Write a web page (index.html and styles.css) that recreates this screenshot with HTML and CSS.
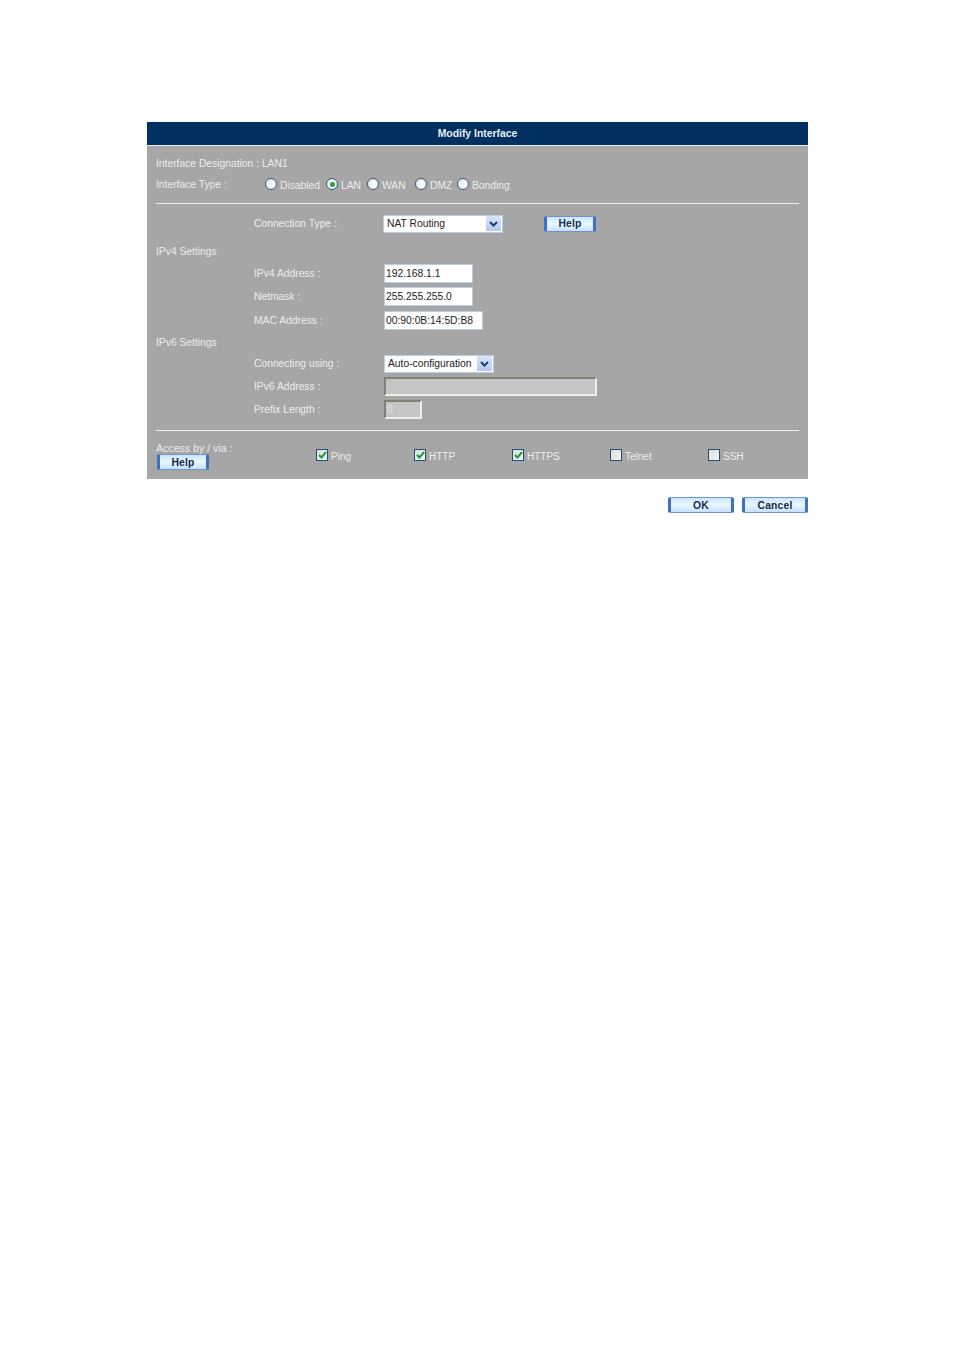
FILE: index.html
```html
<!DOCTYPE html>
<html lang="en">
<head>
    <meta charset="UTF-8">
    <title>Modify Interface</title>
    <link rel="stylesheet" href="styles.css">
</head>
<body>
    <div class="page">
        <div class="panel-title">Modify Interface</div>
        <div class="panel">
            <div class="line designation">Interface Designation : LAN1</div>
            <div class="type-row">
                <span class="type-label">Interface Type :</span>
                <span class="radios">
                    <span class="opt r1"><span class="radio"></span><span class="opt-text">Disabled</span></span>
                    <span class="opt r2"><span class="radio on"></span><span class="opt-text">LAN</span></span>
                    <span class="opt r3"><span class="radio"></span><span class="opt-text">WAN</span></span>
                    <span class="opt r4"><span class="radio"></span><span class="opt-text">DMZ</span></span>
                    <span class="opt r5"><span class="radio"></span><span class="opt-text">Bonding</span></span>
                </span>
            </div>
            <div class="rule rule-top"></div>

            <div class="row conn-row">
                <span class="label">Connection Type :</span>
                <span class="select w-nat">
                    <span class="select-text">NAT Routing</span>
                    <span class="arrow"><svg width="9" height="6" viewBox="0 0 9 6"><path d="M1 1l3.5 3.5L8 1" fill="none" stroke="#1c3f7a" stroke-width="2"/></svg></span>
                </span>
                <span class="btn btn-conn">Help</span>
            </div>

            <div class="section v4">IPv4 Settings</div>
            <div class="row ip-row">
                <span class="label">IPv4 Address :</span>
                <span class="input w-ip">192.168.1.1</span>
            </div>
            <div class="row ip-row">
                <span class="label">Netmask :</span>
                <span class="input w-ip">255.255.255.0</span>
            </div>
            <div class="row ip-row">
                <span class="label">MAC Address :</span>
                <span class="input w-mac">00:90:0B:14:5D:B8</span>
            </div>

            <div class="section v6">IPv6 Settings</div>
            <div class="row using-row">
                <span class="label">Connecting using :</span>
                <span class="select w-auto">
                    <span class="select-text">Auto-configuration</span>
                    <span class="arrow"><svg width="9" height="6" viewBox="0 0 9 6"><path d="M1 1l3.5 3.5L8 1" fill="none" stroke="#1c3f7a" stroke-width="2"/></svg></span>
                </span>
            </div>
            <div class="row ip-row">
                <span class="label">IPv6 Address :</span>
                <span class="input disabled w-v6"></span>
            </div>
            <div class="row ip-row">
                <span class="label">Prefix Length :</span>
                <span class="input disabled w-prefix">0</span>
            </div>
            <div class="rule rule-bottom"></div>

            <div class="access">
                <div class="access-left">
                    <div class="access-label">Access by / via :</div>
                    <span class="btn btn-access">Help</span>
                </div>
                <div class="checks">
                    <span class="check-item"><span class="check on"><svg width="9" height="8" viewBox="0 0 9 8"><path d="M1 4l2.5 2.5L8 1.2" fill="none" stroke="#14a02a" stroke-width="2"/></svg></span><span class="opt-text">Ping</span></span>
                    <span class="check-item"><span class="check on"><svg width="9" height="8" viewBox="0 0 9 8"><path d="M1 4l2.5 2.5L8 1.2" fill="none" stroke="#14a02a" stroke-width="2"/></svg></span><span class="opt-text">HTTP</span></span>
                    <span class="check-item"><span class="check on"><svg width="9" height="8" viewBox="0 0 9 8"><path d="M1 4l2.5 2.5L8 1.2" fill="none" stroke="#14a02a" stroke-width="2"/></svg></span><span class="opt-text">HTTPS</span></span>
                    <span class="check-item"><span class="check"></span><span class="opt-text">Telnet</span></span>
                    <span class="check-item last"><span class="check"></span><span class="opt-text">SSH</span></span>
                </div>
            </div>
        </div>
        <div class="actions">
            <span class="btn btn-ok">OK</span>
            <span class="btn btn-cancel">Cancel</span>
        </div>
    </div>
</body>
</html>
```
FILE: styles.css
```css
* {
    margin: 0;
    padding: 0;
    box-sizing: border-box;
}
body {
    background: white;
    font-family: "Liberation Sans", Arial, sans-serif;
    font-size: 10.3px;
    height: 1350px;
    overflow: hidden;
}
.page {
    width: 661px;
    margin-left: 147px;
    padding-top: 122px;
}
.panel-title {
    height: 23px;
    background: #00305f;
    color: #e8edf3;
    font-size: 10.4px;
    font-weight: bold;
    display: flex;
    align-items: center;
    justify-content: center;
}
.panel {
    height: 334px;
    background: #a6a6a6;
    border-top: 1px solid #f0f0f0;
    padding: 0 9px;
    color: #ececec;
}
.line {
    line-height: 13px;
}
.designation {
    padding-top: 11px;
    height: 24px;
}
.type-row {
    display: flex;
    height: 33px;
    padding-top: 8px;
}
.type-label {
    width: 109px;
    line-height: 13px;
}
.radios {
    display: flex;
    align-items: flex-start;
}
.opt {
    display: flex;
}
.opt .opt-text {
    padding-top: 1.5px;
    margin-left: 3px;
}
.r1 { width: 61px; }
.r2 { width: 41px; }
.r3 { width: 48px; }
.r4 { width: 42px; }
.radio {
    width: 12px;
    height: 12px;
    border-radius: 50%;
    background: radial-gradient(circle at 60% 60%, #ffffff, #dfe4ec);
    border: 1px solid #33597f;
    display: flex;
    align-items: center;
    justify-content: center;
}
.radio.on::after {
    content: "";
    width: 5px;
    height: 5px;
    border-radius: 50%;
    background: #1ea332;
}
.rule {
    height: 1px;
    background: #ededed;
}
.row {
    display: flex;
    align-items: center;
    padding-left: 98px;
}
.label {
    width: 130px;
}
.conn-row {
    height: 19px;
    margin-top: 10px;
}
.section {
    line-height: 13px;
}
.v4 {
    margin-top: 12px;
    height: 18.5px;
}
.ip-row {
    height: 19px;
    margin-bottom: 4.5px;
}
.v6 {
    margin-top: 6px;
    height: 19px;
}
.using-row {
    height: 18px;
    margin-bottom: 4px;
}
.select {
    height: 18px;
    background: white;
    color: #222;
    display: flex;
    align-items: center;
    justify-content: space-between;
    padding: 0 1px 0 3px;
    border: 1px solid #b9cde4;
}
.select-text {
    white-space: nowrap;
}
.w-nat { width: 120px; margin-left: -1px; }
.w-auto { width: 110px; }
.arrow {
    width: 15px;
    height: 15px;
    background: linear-gradient(#dbe6f8, #b4c9ee);
    border-radius: 1px;
    display: flex;
    align-items: center;
    justify-content: center;
}
.input {
    height: 19px;
    background: white;
    color: #222;
    border: 1px solid #b9cde4;
    padding-left: 1px;
    display: flex;
    align-items: center;
}
.w-ip { width: 89px; }
.w-mac { width: 99px; }
.w-v6 { width: 213px; }
.w-prefix { width: 38px; }
.input.disabled {
    background: #c6c6c6;
    color: #e2e2e2;
    border: 2px solid;
    border-color: #827f74 #f0efea #f0efea #827f74;
}
.rule-bottom {
    margin-top: 11px;
}
.access {
    display: flex;
    padding-top: 11px;
}
.access-left {
    width: 160px;
    flex: none;
}
.access-label {
    line-height: 13px;
    font-size: 10.6px;
}
.btn {
    display: flex;
    align-items: center;
    justify-content: center;
    height: 16px;
    color: #14284a;
    font-weight: bold;
    letter-spacing: 0.2px;
    background: linear-gradient(#c8e6fd, #eaf7ff 50%, #c4e0fb);
    border: 1px solid #6d93d8;
    border-left: 3px solid #3f6fc4;
    border-right: 3px solid #3f6fc4;
    border-radius: 2px;
}
.btn-conn {
    width: 52px;
    margin-left: 41px;
}
.btn-access {
    width: 52px;
    margin: -1px 0 0 1px;
}
.checks {
    display: flex;
    padding-top: 7px;
}
.check-item {
    width: 98px;
    display: flex;
}
.check-item.last {
    width: 60px;
}
.check-item .opt-text {
    padding-top: 1.5px;
    margin-left: 3px;
    font-size: 10px;
}
.check {
    width: 12px;
    height: 12px;
    background: linear-gradient(135deg, #d9dcdd, #f6f6f6);
    border: 1px solid #1f4e79;
    display: flex;
    align-items: center;
    justify-content: center;
}
.actions {
    display: flex;
    justify-content: flex-end;
    gap: 8px;
    margin-top: 18px;
}
.btn-ok {
    width: 66px;
}
.btn-cancel {
    width: 66px;
}
```
